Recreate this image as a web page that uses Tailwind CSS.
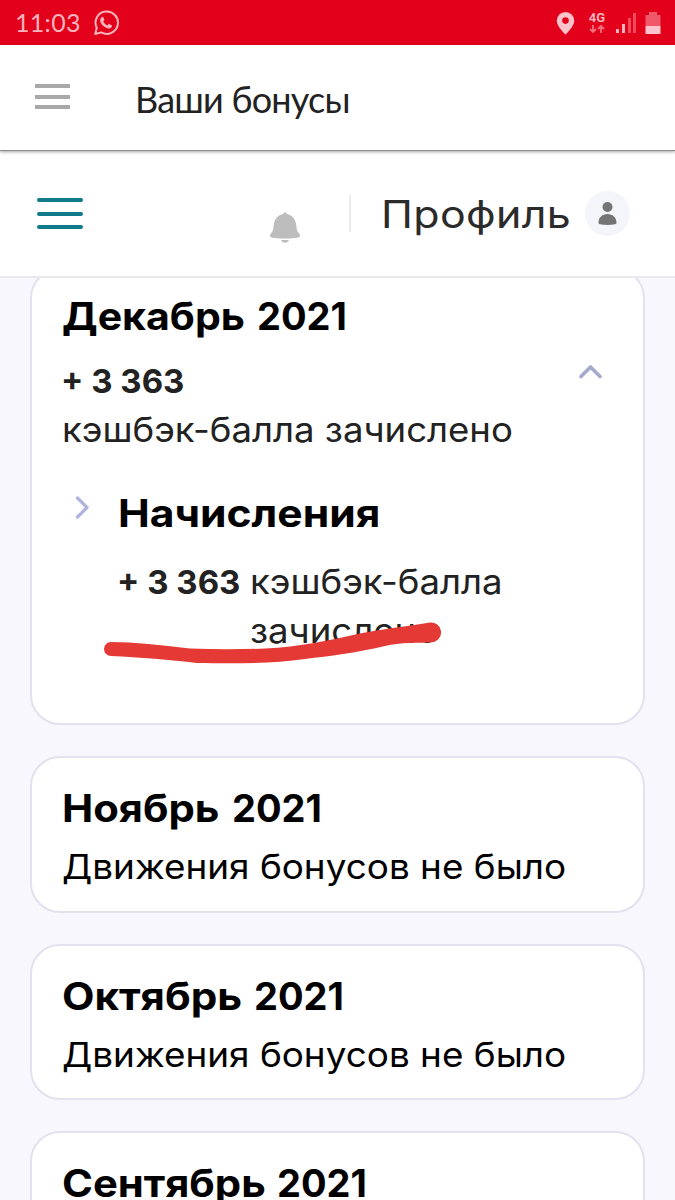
<!DOCTYPE html>
<html lang="ru">
<head>
    <meta charset="UTF-8">
    <meta name="viewport" content="width=device-width, initial-scale=1.0">
    <title>Ваши бонусы</title>
    <script src="https://cdn.jsdelivr.net/npm/@tailwindcss/browser@4"></script>
</head>
<body class="bg-[#f8f7fe] font-['Inter',sans-serif] text-black h-[1200px] flex flex-col overflow-hidden whitespace-nowrap">

    <!-- Status bar -->
    <div class="h-[45px] shrink-0 bg-[#e3001b] flex items-center justify-between pl-[15px] pr-[14px]">
        <div class="flex items-center gap-[11px]">
            <span class="w-[67px] font-['Lato',sans-serif] text-[25px] leading-[45px] tracking-[0.3px] text-[#ffb3bd]">11:03</span>
            <svg class="w-[26px] h-[26px]" viewBox="0 0 26 26" fill="none">
                <path d="M2.2 24l1.6-6.2A11.2 11.2 0 1 1 8.2 22.400z" stroke="#ffb3bd" stroke-width="2" stroke-linejoin="round"/>
                <path d="M8.700 7.200c.6-.6 1.300-.5 1.600.1l1 2.200c.2.5 0 .8-1.100 2 1 2 2.400 3.200 4.300 4 1-1.300 1.300-1.600 1.800-1.400l2.300 1.200c.7.4.3 1.700-.3 2.300-1.200 1.200-3 1.200-5.300.1-2.700-1.300-4.800-3.500-5.700-6-.6-1.800.4-3.600 1.400-4.500z" fill="#ffb3bd"/>
            </svg>
        </div>
        <div class="flex items-center">
            <svg class="w-[19px] h-[24px] mr-[13px]" viewBox="0 0 19 24">
                <path fill="#ffc4cb" fill-rule="evenodd" d="M9.500 1A8.800 8.800 0 0 0 .7 9.700C.7 15.500 9.500 23.500 9.500 23.500s8.800-8 8.800-13.800A8.800 8.800 0 0 0 9.500 1zm0 5.300a3.300 3.300 0 1 1 0 6.600 3.300 3.300 0 0 1 0-6.600z"/>
            </svg>
            <div class="w-[18px] mr-[9px] flex flex-col items-center">
                <span class="font-['Roboto',sans-serif] font-bold text-[13px] leading-[13px] text-[#ffb3bd]">4G</span>
                <svg class="w-[16px] h-[10px]" viewBox="0 0 16 10" fill="none" stroke="#f2707f" stroke-width="1.800">
                    <path d="M4 1v7M1 5l3 3 3-3M12 9V2M9 5l3-3 3 3"/>
                </svg>
            </div>
            <svg class="w-[22px] h-[22px] mr-[8px]" viewBox="0 0 22 22">
                <path fill="#ffb3bd" d="M1 17h3v4H1zM7 12h3v9H7z"/>
                <path fill="#ee4a5c" d="M13 6h3v15h-3zM18 1h3v20h-3z"/>
            </svg>
            <svg class="w-[16px] h-[24px]" viewBox="0 0 16 24">
                <path fill="#f0596a" d="M4 1h8v3h3.500v11H.5V4H4z"/>
                <path fill="#ffc4cb" d="M.5 15h15v8H.5z"/>
            </svg>
        </div>
    </div>

    <!-- App title -->
    <div class="relative z-20 h-[106px] shrink-0 bg-white border-b border-[#8c8c8c] shadow-[0_1px_3px_rgba(0,0,0,0.35)] flex items-center pl-[35px]">
        <div class="flex flex-col gap-[6.5px] w-[35px] -mt-[2px]">
            <span class="h-[4px] bg-[#a9a9a9]"></span>
            <span class="h-[4px] bg-[#a9a9a9]"></span>
            <span class="h-[4px] bg-[#a9a9a9]"></span>
        </div>
        <h1 class="ml-[65px] mt-[3px] font-['Lato',sans-serif] text-[36px] tracking-[-0.8px] text-[#222]">Ваши бонусы</h1>
    </div>

    <!-- Site header -->
    <header class="relative z-10 h-[127px] shrink-0 bg-white border-b-2 border-[#e9e9ee] flex items-center pl-[37px] pr-[45px]">
        <div class="flex flex-col gap-[9.500px] w-[46px]">
            <span class="h-[4px] rounded-full bg-[#117a8a]"></span>
            <span class="h-[4px] rounded-full bg-[#117a8a]"></span>
            <span class="h-[4px] rounded-full bg-[#117a8a]"></span>
        </div>
        <svg class="ml-[187px] mt-[28px] w-[30px] h-[32px]" viewBox="0 0 30 32" fill="#bdbdbd">
            <path d="M15 .5c1 0 1.600.6 1.900 1.400C23 3.200 25.800 8 26.300 13.500c.3 3.600.8 6.500 3 8.300 1.200 1.200.8 3.200-.8 3.700-7 1.300-20 1.300-27 0-1.600-.5-2-2.500-.8-3.700 2.200-1.800 2.700-4.700 3-8.300C4.200 8 7 3.200 13.100 1.900 13.400 1.100 14 .5 15 .5z"/>
            <path d="M11 28h8c-.6 1.600-2 2.700-4 2.700S11.600 29.600 11 28z"/>
        </svg>
        <div class="ml-[49px] w-[2px] h-[37px] bg-[#e9e9ee]"></div>
        <span class="ml-[30px] w-[204px] origin-left scale-x-[1.13] text-[38px] leading-[48px] tracking-[0.3px] text-[#2b2b2b]">Профиль</span>
        <svg class="shrink-0 w-[45px] h-[45px]" viewBox="0 0 45 45">
            <circle cx="22.500" cy="22.500" r="22.500" fill="#f4f5fa"/>
            <circle cx="22.500" cy="16" r="5" fill="#757575"/>
            <path fill="#757575" d="M13.500 31.500c0-5 4-8.500 9-8.500s9 3.500 9 8.500c0 1-.5 1.600-1.500 1.800-4.500.9-10.500.9-15 0-1-.2-1.500-.8-1.500-1.800z"/>
        </svg>
    </header>

    <!-- Months -->
    <main class="-mt-[10px] px-[30px] flex flex-col gap-[31px]">
        <section class="relative h-[457px] shrink-0 bg-white border-2 border-[#e2e2ee] rounded-[30px] pt-[18px] pl-[30px]">
            <h2 class="flex text-[38px] leading-[56px] font-bold">
                <span class="w-[195px] origin-left scale-x-[1.08]">Декабрь</span>
                <span>2021</span>
            </h2>
            <div class="mt-[13px] flex justify-between pr-[40px]">
                <div class="text-[#222] leading-[48.500px]">
                    <p class="-ml-px text-[33px] font-bold">+ 3 363</p>
                    <p class="w-fit origin-left scale-x-[1.075] text-[34px]">кэшбэк-балла зачислено</p>
                </div>
                <svg class="mt-[7px] w-[25px] h-[15px]" viewBox="0 0 25 15" fill="none" stroke="#a5aacb" stroke-width="3.600" stroke-linecap="round" stroke-linejoin="round">
                    <path d="M3 12.500l9.500-9.500 9.500 9.500"/>
                </svg>
            </div>
            <div class="mt-[31px] pl-[12px] flex items-start">
                <svg class="mt-[10px] mr-[27px] w-[17px] h-[25px]" viewBox="0 0 17 25" fill="none" stroke="#b0b4dc" stroke-width="3.200" stroke-linecap="round" stroke-linejoin="round">
                    <path d="M3.500 3l9.500 9.500-9.500 9.500"/>
                </svg>
                <div>
                    <h3 class="w-fit origin-left scale-x-[1.12] text-[38px] leading-[56px] font-bold">Начисления</h3>
                    <div class="mt-[17px] flex text-[#222] leading-[48.500px]">
                        <span class="-ml-px w-[133px] text-[33px] font-bold">+ 3 363</span>
                        <p class="origin-left scale-x-[1.075] text-[34px]">кэшбэк-балла<br>зачислено</p>
                    </div>
                </div>
            </div>
            <!-- marker stroke over the amount -->
            <svg class="absolute left-[72px] top-[352px] w-[341px] h-[43px]" viewBox="104 622 341 43" fill="#e53935">
                <path d="M111 642C135 642 160 645 190 648.500C215 649.500 240 649.500 265 648.500C300 647 330 640 360 633.500C385 628.500 410 626 430 622.500A10 10 0 0 1 434 642C418 643.500 400 642 385 646C355 653 330 656 305 659C270 664 230 663.500 197 663C170 659.500 140 657.500 111 656A7 7 0 0 1 111 642z"/>
            </svg>
        </section>

        <section class="h-[156.500px] shrink-0 bg-white border-2 border-[#e2e2ee] rounded-[30px] pt-[22px] pl-[30px]">
            <h2 class="flex text-[38px] leading-[56px] font-bold">
                <span class="w-[170px] origin-left scale-x-[1.1]">Ноябрь</span>
                <span>2021</span>
            </h2>
            <p class="mt-[7px] w-fit origin-left scale-x-[1.085] text-[34px] leading-[48px]">Движения бонусов не было</p>
        </section>

        <section class="h-[156.500px] shrink-0 bg-white border-2 border-[#e2e2ee] rounded-[30px] pt-[22px] pl-[30px]">
            <h2 class="flex text-[38px] leading-[56px] font-bold">
                <span class="w-[192px] origin-left scale-x-[1.11]">Октябрь</span>
                <span>2021</span>
            </h2>
            <p class="mt-[7px] w-fit origin-left scale-x-[1.085] text-[34px] leading-[48px]">Движения бонусов не было</p>
        </section>

        <section class="h-[156.500px] shrink-0 bg-white border-2 border-[#e2e2ee] rounded-[30px] pt-[22px] pl-[30px]">
            <h2 class="flex text-[38px] leading-[56px] font-bold">
                <span class="w-[215px] origin-left scale-x-[1.1]">Сентябрь</span>
                <span>2021</span>
            </h2>
        </section>
    </main>

</body>
</html>
